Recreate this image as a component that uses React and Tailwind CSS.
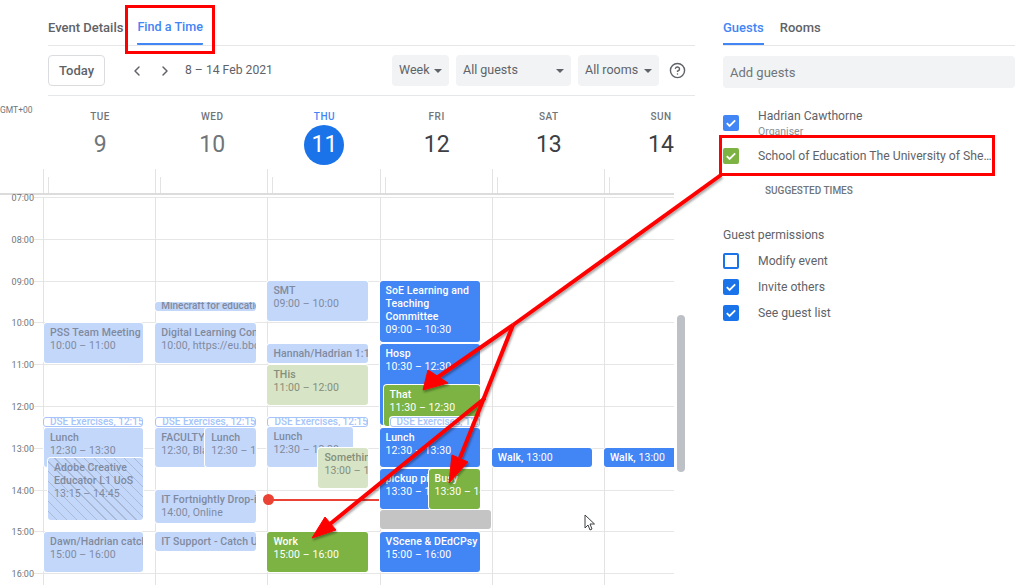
import React from "react";
import { ChevronLeft, ChevronRight, CircleHelp } from "lucide-react";

const F = "text-[#808a9e] bg-[#c3d7fb]";
const FG = "text-[#848e7c] bg-[#d8e4c6]";
const B = "text-white bg-[#4285f4]";
const G = "text-white bg-[#7cb342]";
const HATCH =
  "text-[#808a9e] bg-[repeating-linear-gradient(45deg,#c3d7fb_0px,#c3d7fb_6px,#a9b9d6_6px,#a9b9d6_7px)]";
const DSE = "text-[#a6c4fa] bg-white border border-[#a6c4fa] font-medium";
const TOP = 197;

const days = [
  { d: "TUE", n: "9", muted: true },
  { d: "WED", n: "10", muted: true },
  { d: "THU", n: "11", today: true },
  { d: "FRI", n: "12" },
  { d: "SAT", n: "13" },
  { d: "SUN", n: "14" },
];
const hours = ["07:00", "08:00", "09:00", "10:00", "11:00", "12:00", "13:00", "14:00", "15:00", "16:00"];

// x is relative to the day column, y values are page coordinates on the calendar canvas
const columns = [
  [
    { x: 1, w: 99, y: 323, b: 363, c: F, t: "PSS Team Meeting", s: "10:00 – 11:00" },
    { x: 0, w: 100, y: 417, b: 427, c: DSE, one: "DSE Exercises, 12:15" },
    { x: 1, w: 99, y: 428, b: 467, c: F, t: "Lunch", s: "12:30 – 13:30" },
    { x: 5, w: 95, y: 458, b: 520, c: HATCH, t: "Adobe Creative Educator L1 UoS", s: "13:15 – 14:45", plain: true },
    { x: 1, w: 99, y: 532, b: 572, c: F, t: "Dawn/Hadrian catch up", s: "15:00 – 16:00" },
  ],
  [
    { x: 0, w: 101, y: 302, b: 311, c: F, one: "Minecraft for education" },
    { x: 0, w: 101, y: 323, b: 363, c: F, t: "Digital Learning Community", s: "10:00, https://eu.bbcollab.com" },
    { x: 0, w: 101, y: 417, b: 427, c: DSE, one: "DSE Exercises, 12:15" },
    { x: 0, w: 60, y: 428, b: 467, c: F, t: "FACULTY meeting", s: "12:30, Blackboard" },
    { x: 50, w: 51, y: 428, b: 467, c: F, t: "Lunch", s: "12:30 – 13:30" },
    { x: 0, w: 101, y: 490, b: 523, c: F, t: "IT Fortnightly Drop-in session", s: "14:00, Online" },
    { x: 0, w: 101, y: 532, b: 551, c: F, one: "IT Support - Catch Up session", tall: true },
  ],
  [
    { x: 0, w: 101, y: 281, b: 321, c: F, t: "SMT", s: "09:00 – 10:00" },
    { x: 0, w: 101, y: 344, b: 363, c: F, one: "Hannah/Hadrian 1:1", tall: true },
    { x: 0, w: 101, y: 365, b: 405, c: FG, t: "THis", s: "11:00 – 12:00" },
    { x: 0, w: 101, y: 417, b: 427, c: DSE, one: "DSE Exercises, 12:15" },
    { x: 0, w: 86, y: 427, b: 467, c: F, t: "Lunch", s: "12:30 – 13:30" },
    { x: 51, w: 50, y: 448, b: 488, c: FG, t: "Something", s: "13:00 – 14:00" },
    { x: 0, w: 101, y: 532, b: 572, c: G, t: "Work", s: "15:00 – 16:00" },
  ],
  [
    { x: 0, w: 100, y: 281, b: 342, c: B, t: "SoE Learning and Teaching Committee", s: "09:00 – 10:30", wrap: true },
    { x: 0, w: 100, y: 344, b: 425, c: B, t: "Hosp", s: "10:30 – 12:30" },
    { x: 4, w: 96, y: 385, b: 426, c: G, t: "That", s: "11:30 – 12:30" },
    { x: 10, w: 90, y: 417, b: 427, c: DSE, one: "DSE Exercises, 12:15" },
    { x: 0, w: 100, y: 428, b: 467, c: B, t: "Lunch", s: "12:30 – 13:30" },
    { x: 0, w: 60, y: 469, b: 509, c: B, t: "pickup pizza", s: "13:30 – 14:30" },
    { x: 49, w: 51, y: 469, b: 509, c: G, t: "Busy", s: "13:30 – 14:30" },
    { x: 0, w: 111, y: 510, b: 529, c: "bg-[#c4c4c4]", one: "" },
    { x: 0, w: 100, y: 532, b: 572, c: B, t: "VScene & DEdCPsy", s: "15:00 – 16:00" },
  ],
  [{ x: 0, w: 100, y: 448, b: 467, c: B, one: "Walk, 13:00", walk: true, tall: true }],
  [{ x: 0, w: 100, y: 448, b: 467, c: B, one: "Walk, 13:00", walk: true, tall: true }],
];

function Event({ e }) {
  const style = { left: e.x - 1, width: e.w, top: e.y - TOP, height: e.b - e.y };
  const base = "absolute overflow-hidden rounded-[3px] shadow-[0_0_0_1px_#ffffff]";
  const body = "text-[10.5px] leading-[13px] tracking-[0.1px]";
  if (e.one !== undefined) {
    return (
      <div style={style} className={`${base} ${e.c} whitespace-nowrap pl-[6px] ${e.tall ? `${body} pt-[3px]` : "text-[10px] leading-[8px]"}`}>
        {e.walk ? (
          <>
            <span className="font-medium">Walk,</span> 13:00
          </>
        ) : (
          <span className="font-medium">{e.one}</span>
        )}
      </div>
    );
  }
  return (
    <div style={style} className={`${base} ${body} ${e.c} px-[6px] pt-[3px]`}>
      <div className={`font-medium ${e.plain || e.wrap ? "" : "whitespace-nowrap"}`}>{e.t}</div>
      <div className="whitespace-nowrap">{e.s}</div>
    </div>
  );
}

function Check({ color = "bg-[#1a73e8]", on = true }) {
  if (!on)
    return <div className="w-[16px] h-[16px] shrink-0 rounded-[2px] border-2 border-[#1a73e8] bg-white" />;
  return (
    <div className={`w-[16px] h-[16px] shrink-0 rounded-[2px] ${color} flex items-center justify-center`}>
      <svg width="12" height="12" viewBox="0 0 12 12" fill="none" stroke="#fff" strokeWidth="1.8">
        <path d="M1.8 6.2 4.6 9l5.6-5.6" />
      </svg>
    </div>
  );
}

function Caret() {
  return <span className="w-0 h-0 border-x-[4px] border-x-transparent border-t-[4px] border-t-[#5f6368]" />;
}

function Select({ w, label }) {
  return (
    <div className={`${w} h-[31px] rounded-[4px] bg-[#f1f3f4] flex items-center justify-between pl-[7px] pr-[7px] text-[12.5px] text-[#5f6368]`}>
      <span>{label}</span>
      <Caret />
    </div>
  );
}

function Perm({ on, label }) {
  return (
    <div className="h-[26px] flex items-center gap-[19px] text-[12.2px] text-[#5f6368]">
      <Check on={on} />
      <span>{label}</span>
    </div>
  );
}

function Overlays() {
  return (
    <>
      <div className="absolute left-[125px] top-[5px] w-[90px] h-[49px] border-[3px] border-[#ff0000]" />
      <div className="absolute left-[719px] top-[135px] w-[276px] h-[41px] border-[3px] border-[#ff0000]" />
      <svg className="absolute left-0 top-0 pointer-events-none" width="1024" height="585" viewBox="0 0 1024 585">
        <defs>
          <filter id="sh" x="-10%" y="-10%" width="120%" height="120%">
            <feDropShadow dx="1" dy="2" stdDeviation="1.2" floodColor="#000" floodOpacity="0.35" />
          </filter>
        </defs>
        <g filter="url(#sh)" fill="#ff0000" stroke="#ff0000" strokeLinejoin="round">
          <path d="M721 175 513 325" fill="none" strokeWidth="4" />
          <path d="M513 325 438 377" fill="none" strokeWidth="4" />
          <path d="M513 325 460 458" fill="none" strokeWidth="4" />
          <path d="M485 398 330 524" fill="none" strokeWidth="4" />
          <path d="M423 390 428 370 448 383Z" strokeWidth="1" />
          <path d="M449 483 452 455 468 462Z" strokeWidth="1" />
          <path d="M312 538 325 517 336 530Z" strokeWidth="1" />
        </g>
      </svg>
      <svg className="absolute left-[584px] top-[514px]" width="12" height="17" viewBox="0 0 12 17">
        <path d="M1 1v13l3-3 2 5 2-1-2-5h4.5Z" fill="#fff" stroke="#3c4043" strokeWidth="1" />
      </svg>
    </>
  );
}

export default function App() {
  return (
    <div className="relative w-[1024px] h-[585px] overflow-hidden bg-white flex font-['Roboto','Liberation_Sans',sans-serif]">
      {/* left: calendar */}
      <div className="w-[723px] shrink-0 flex flex-col">
        <div className="ml-[48px] mr-[28px] h-[46px] border-b border-[#e6e7e9] flex items-end gap-[14px] text-[13px] font-medium">
          <div className="h-[46px] pt-[19px] text-[#5f6368]">Event Details</div>
          <div className="h-[46px] pt-[19px] text-[12.6px] text-[#4285f4] border-b-[2px] border-[#4285f4] rounded-b-[1px]">Find a Time</div>
        </div>
        <div className="ml-[48px] mr-[28px] h-[50px] border-b border-[#e6e7e9] flex items-start pt-[9px]">
          <div className="w-[57px] h-[31px] border border-[#dadce0] rounded-[4px] flex items-center justify-center text-[13px] font-medium text-[#5f6368]">
            Today
          </div>
          <div className="ml-[24px] h-[31px] flex items-center gap-[12px] text-[#5f6368]">
            <ChevronLeft size={16} strokeWidth={2.2} />
            <ChevronRight size={16} strokeWidth={2.2} />
          </div>
          <div className="ml-[12px] h-[31px] flex items-center text-[12.2px] text-[#5f6368]">8 – 14 Feb 2021</div>
          <div className="ml-auto flex items-center gap-[7px]">
            <Select w="w-[57px]" label="Week" />
            <Select w="w-[115px]" label="All guests" />
            <Select w="w-[81px]" label="All rooms" />
            <CircleHelp size={17} className="ml-[3px] mr-[9px] text-[#5f6368]" />
          </div>
        </div>

        {/* day header */}
        <div className="relative h-[73px] flex pt-[15px]">
          <div className="w-[44px] shrink-0 text-[8.5px] leading-[10px] text-[#70757a] -mt-[6px]">GMT+00</div>
          {days.map((x) => (
            <div key={x.d} className="w-[112.2px] shrink-0 flex flex-col items-center">
              <div className={`text-[10px] leading-[12px] font-medium tracking-[0.5px] ${x.today ? "text-[#4285f4]" : "text-[#70757a]"}`}>{x.d}</div>
              <div
                className={`mt-[2px] w-[40px] h-[40px] rounded-full flex items-center justify-center text-[23px] ${
                  x.today ? "bg-[#1a73e8] text-white" : x.muted ? "text-[#70757a]" : "text-[#3c4043]"
                }`}
              >
                {x.n}
              </div>
            </div>
          ))}
        </div>

        {/* all-day strip */}
        <div className="w-[674px] h-[26px] flex border-b-2 border-[#dcdcdc] overflow-hidden">
          <div className="w-[43px] shrink-0" />
          {days.map((x) => (
            <div key={x.d} className="w-[112.2px] shrink-0 border-l border-[#e3e3e3] pl-[4px] pt-[8px]">
              <div className="h-full border-l border-[#e3e3e3]" />
            </div>
          ))}
        </div>

        {/* time grid */}
        <div className="w-[674px] flex-1 -mt-[3px] pt-[5px] flex overflow-hidden">
          <div className="w-[43px] shrink-0">
            {hours.map((h) => (
              <div key={h} className="h-[41.8px] flex items-start">
                <span className="-mt-[4px] w-[34px] text-right text-[9px] leading-[10px] text-[#70757a]">{h}</span>
                <span className="flex-1 border-t border-[#e6e6e6]" />
              </div>
            ))}
          </div>
          {columns.map((col, i) => (
            <div key={i} className="relative w-[112.2px] shrink-0 border-l border-[#e3e3e3]">
              {hours.map((h) => (
                <div key={h} className="h-[41.8px] border-t border-[#e6e6e6]" />
              ))}
              {col.map((e, j) => (
                <Event key={j} e={e} />
              ))}
              {i === 2 && (
                <div className="absolute left-0 right-0 top-[302px] h-[2px] bg-[#ea4335]">
                  <div className="absolute -left-[5px] -top-[5px] w-[11px] h-[11px] rounded-full bg-[#ea4335]" />
                </div>
              )}
            </div>
          ))}
        </div>
      </div>

      {/* scrollbar */}
      <div className="absolute left-[677px] top-[315px] w-[8px] h-[157px] rounded-[4px] bg-[#bdc1c6]" />

      {/* right: guests */}
      <div className="w-[292px] shrink-0 flex flex-col">
        <div className="h-[46px] border-b border-[#e6e7e9] flex items-end gap-[16px] text-[13px] font-medium">
          <div className="h-[46px] pt-[19px] text-[#4285f4] border-b-[2px] border-[#4285f4]">Guests</div>
          <div className="h-[46px] pt-[19px] text-[#5f6368]">Rooms</div>
        </div>
        <div className="mt-[10px] h-[32px] rounded-[4px] bg-[#f1f3f4] pl-[7px] pt-[1px] flex items-center text-[13px] text-[#70757a]">Add guests</div>
        <div className="mt-[19px] h-[34px] overflow-hidden flex gap-[19px]">
          <div className="pt-[8px]">
            <Check color="bg-[#4285f4]" />
          </div>
          <div className="text-[#5f6368] pt-[1px]">
            <div className="text-[12.2px] leading-[17px]">Hadrian Cawthorne</div>
            <div className="text-[10.5px] leading-[14px] text-[#8a8f94]">Organiser</div>
          </div>
        </div>
        <div className="h-[30px] flex items-center gap-[19px] text-[12.2px] text-[#5f6368]">
          <Check color="bg-[#7cb342]" />
          <span className="w-[234px] truncate">School of Education The University of Sheffield</span>
        </div>
        <div className="mt-[13px] ml-[42px] text-[10px] leading-[14px] font-medium text-[#70757a]">SUGGESTED TIMES</div>
        <div className="mt-[29px] text-[12.2px] leading-[16px] text-[#5f6368]">Guest permissions</div>
        <div className="mt-[5px]">
          <Perm on={false} label="Modify event" />
          <Perm on label="Invite others" />
          <Perm on label="See guest list" />
        </div>
      </div>

      <Overlays />
    </div>
  );
}
